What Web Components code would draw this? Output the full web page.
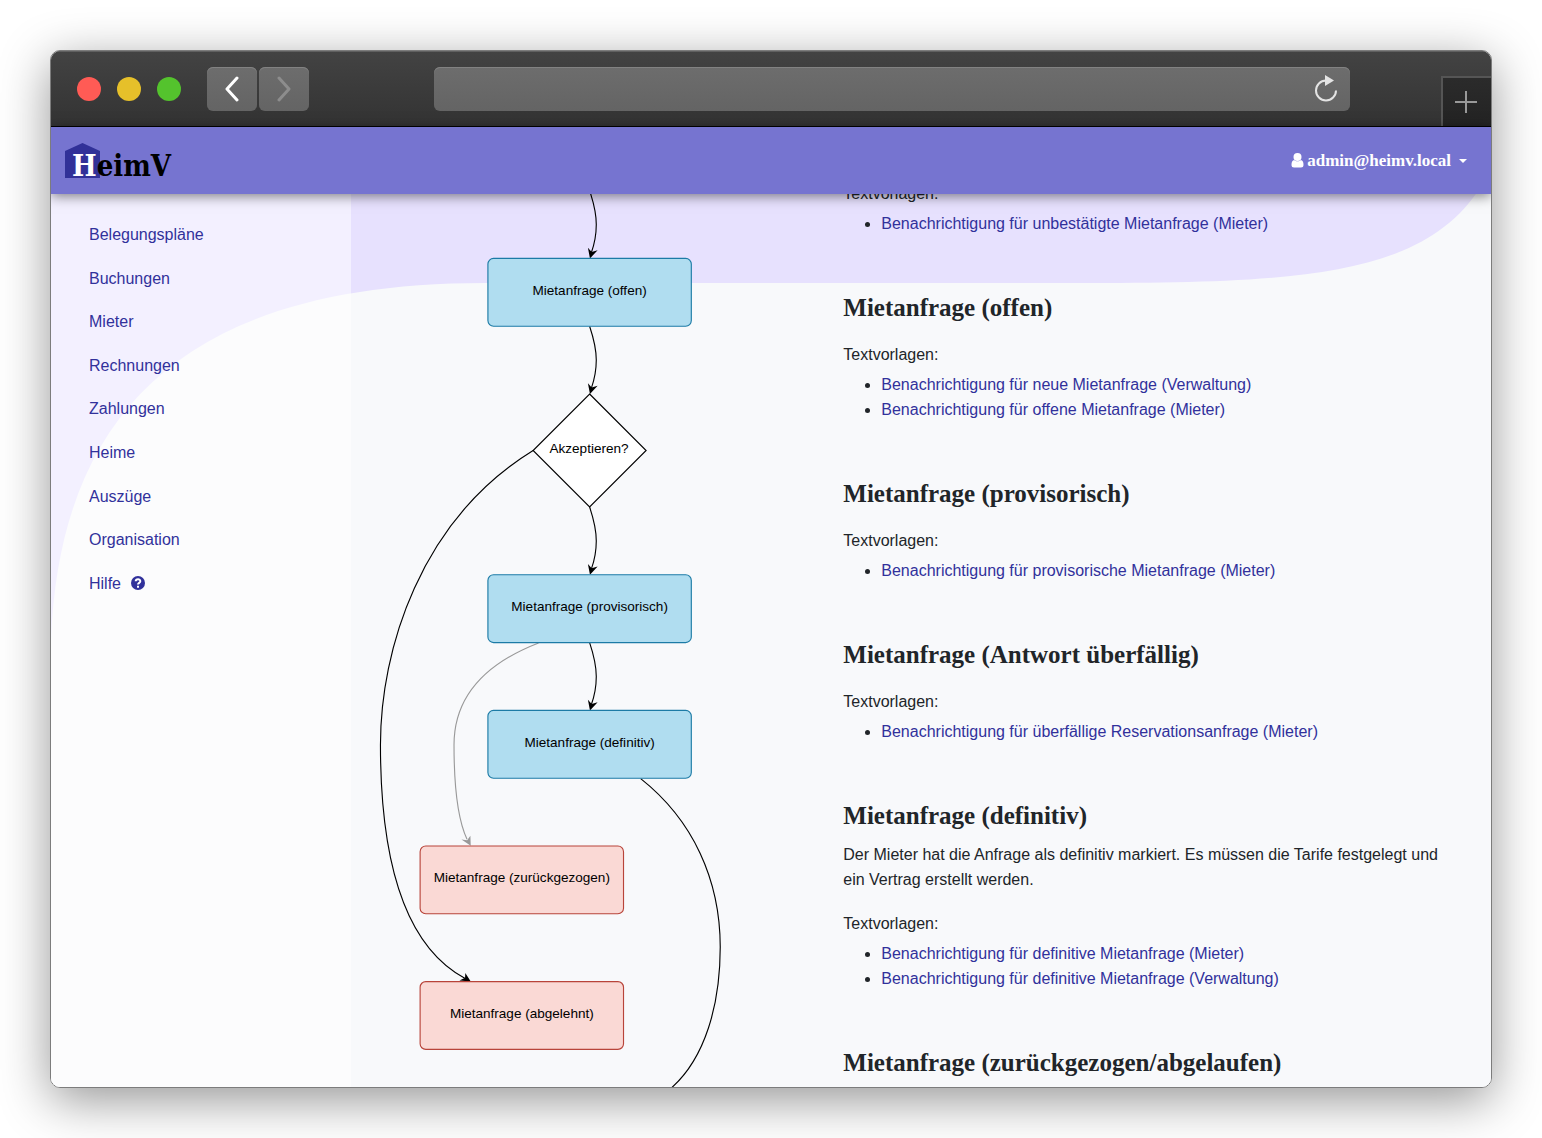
<!DOCTYPE html>
<html lang="de">
<head>
<meta charset="utf-8">
<title>HeimV</title>
<style>
  body {
    margin: 0;
    background: #fff;
    color: #212529;
    font: 16px/25px "Liberation Sans", Arial, sans-serif;
    --link: #31319b;
    --brand: #7674d0;
    --slab: "Liberation Serif", "Times New Roman", serif;
  }
</style>
</head>
<body>
<browser-window>
  <app-header slot="header" user="admin@heimv.local"></app-header>
  <side-nav slot="side"></side-nav>
  <flow-chart slot="diagram"></flow-chart>
  <state-section>
    <a slot="link" href="#t1">Benachrichtigung für unbestätigte Mietanfrage (Mieter)</a>
  </state-section>
  <state-section heading="Mietanfrage (offen)">
    <a slot="link" href="#t2">Benachrichtigung für neue Mietanfrage (Verwaltung)</a>
    <a slot="link" href="#t3">Benachrichtigung für offene Mietanfrage (Mieter)</a>
  </state-section>
  <state-section heading="Mietanfrage (provisorisch)">
    <a slot="link" href="#t4">Benachrichtigung für provisorische Mietanfrage (Mieter)</a>
  </state-section>
  <state-section heading="Mietanfrage (Antwort überfällig)">
    <a slot="link" href="#t5">Benachrichtigung für überfällige Reservationsanfrage (Mieter)</a>
  </state-section>
  <state-section heading="Mietanfrage (definitiv)" description="Der Mieter hat die Anfrage als definitiv markiert. Es müssen die Tarife festgelegt und ein Vertrag erstellt werden.">
    <a slot="link" href="#t6">Benachrichtigung für definitive Mietanfrage (Mieter)</a>
    <a slot="link" href="#t7">Benachrichtigung für definitive Mietanfrage (Verwaltung)</a>
  </state-section>
  <state-section heading="Mietanfrage (zurückgezogen/abgelaufen)" bare></state-section>
</browser-window>

<script>
const define = (name, render) => customElements.define(name, class extends HTMLElement {
  connectedCallback() {
    if (this.shadowRoot) return;
    this.attachShadow({ mode: 'open' }).innerHTML = render(this);
  }
});

define('browser-window', () => `
  <style>
    :host { display: block; box-sizing: border-box; height: 100vh; padding: 50px; }
    .window {
      box-sizing: border-box; height: 100%; display: flex; flex-direction: column;
      border: 1px solid #7c7c7c; border-radius: 10px; overflow: hidden;
      box-shadow: 0 12px 50px rgba(0,0,0,.42);
    }
    .bar {
      flex: none; display: flex; align-items: center; box-sizing: border-box; height: 76px; padding-left: 26px;
      background: linear-gradient(#434343, #333); border-bottom: 1px solid #000;
      box-shadow: inset 0 1px #606060;
    }
    .dots { display: flex; gap: 16px; }
    .dots i { width: 24px; height: 24px; border-radius: 50%; background: #ff5b55; }
    .dots i:nth-child(2) { background: #e6c02a; }
    .dots i:nth-child(3) { background: #54c32d; }
    .history { display: flex; gap: 2px; margin-left: 26px; }
    button { border: 0; padding: 0; margin: 0; background: none; display: grid; place-items: center; }
    .history button, .address {
      height: 44px; border-radius: 6px; background: linear-gradient(#6d6d6d, #646464);
      box-shadow: inset 0 1px #828282;
    }
    .history button { width: 50px; }
    .address { flex: 1; display: flex; align-items: center; margin: 0 91px 0 125px; min-width: 0; }
    input { flex: 1; min-width: 0; border: 0; background: none; height: 40px; padding: 0 12px; color: #fff; outline: 0; }
    .reload { width: 48px; height: 44px; }
    .tab {
      align-self: flex-end; box-sizing: border-box; width: 50px; height: 50px; padding-right: 2px;
      background: linear-gradient(#2b2b2b, #232323); border: solid #555; border-width: 2px 0 0 2px;
    }
    main { position: relative; flex: 1; min-height: 0; display: flex; overflow: hidden; background: #f8f9fb; }
    .backdrop { position: absolute; inset: 0; width: 100%; height: 100%; }
    aside, article { position: relative; }
    aside { flex: none; width: 300px; background: rgba(255,255,255,.5); }
    article { flex: 1; display: grid; grid-template-columns: 3fr 4fr; align-items: start; padding: 0 30px 0 29px; }
    .sections { margin-top: -13px; }
  </style>
  <div class="window">
    <div class="bar">
      <div class="dots"><i></i><i></i><i></i></div>
      <div class="history">
        <button aria-label="Zurück"><svg width="16" height="26" fill="none" stroke="#fff" stroke-width="3" stroke-linecap="round" stroke-linejoin="round"><path d="M13 2 3 13l10 11"/></svg></button>
        <button aria-label="Vorwärts"><svg width="16" height="26" fill="none" stroke="#8d8d8d" stroke-width="3" stroke-linecap="round" stroke-linejoin="round"><path d="M3 2l10 11L3 24"/></svg></button>
      </div>
      <div class="address">
        <input aria-label="Adresse">
        <button class="reload" aria-label="Neu laden"><svg width="24" height="28" viewBox="0 0 24 28"><path d="M12 5.500a10 10 0 1 0 10 10" fill="none" stroke="#e4e4e4" stroke-width="2"/><path d="M11 0l9 5.500L11 11z" fill="#e4e4e4"/></svg></button>
      </div>
      <button class="tab" aria-label="Neuer Tab"><svg width="22" height="22" stroke="#999" stroke-width="2"><path d="M11 0v22M0 11h22"/></svg></button>
    </div>
    <slot name="header"></slot>
    <main>
      <svg class="backdrop" viewBox="0 0 1440 893" preserveAspectRatio="none" aria-hidden="true">
        <path fill="#e7e1fe" d="M0 0V446C9 206 149 89 434 89H1009C1239 89 1369 86 1429-6Z"/>
      </svg>
      <aside><slot name="side"></slot></aside>
      <article>
        <slot name="diagram"></slot>
        <div class="sections"><slot></slot></div>
      </article>
    </main>
  </div>`);

define('app-header', el => `
  <style>
    :host {
      position: relative; z-index: 1; flex: none; display: flex; align-items: center; justify-content: space-between;
      box-sizing: border-box; height: 67px; padding: 0 24px 0 14px; background: var(--brand);
      box-shadow: 0 2px 12px rgba(0,0,0,.5);
    }
    a, svg { display: block; }
    text { font: bold 29px "DejaVu Serif Condensed", "DejaVu Serif", serif; }
    button {
      display: flex; align-items: center; padding: 0; border: 0; background: none; color: #fff;
      font: bold 17px/25px var(--slab);
    }
    .caret { margin-left: 8px; border: solid transparent; border-width: 4px 4px 0; border-top-color: #fff; }
    .user { margin-right: 3px; }
  </style>
  <a href="#" aria-label="HeimV Startseite"><svg width="120" height="52" viewBox="0 -8 120 52">
    <path d="M0 8 17.500 0 35 8v27H0z" fill="#313198"/>
    <text x="7" y="33"><tspan fill="#fff">H</tspan><tspan>eimV</tspan></text>
  </svg></a>
  <button aria-haspopup="true">
    <svg class="user" width="13" height="15" fill="#fff"><circle cx="6.500" cy="4" r="4"/><path d="M3 7C1 7.500 .5 9.500 .5 12c0 1.700 1 2.500 2.500 2.500h7c1.500 0 2.500-.8 2.500-2.500 0-2.500-.5-4.500-2.500-5-2 1.800-5 1.800-7 0z"/></svg>
    <span>${el.getAttribute('user')}</span><span class="caret"></span>
  </button>`);

define('side-nav', () => `
  <style>
    :host { display: block; padding: 19px 38px; }
    ul { list-style: none; margin: 0; padding: 0; display: grid; height: 392px; grid-auto-rows: 1fr; align-items: center; }
    a { color: var(--link); text-decoration: none; display: flex; align-items: center; gap: 10px; }
  </style>
  <nav><ul>
    ${['Belegungspläne', 'Buchungen', 'Mieter', 'Rechnungen', 'Zahlungen', 'Heime', 'Auszüge', 'Organisation'].map(t => `<li><a href="#">${t}</a></li>`).join('')}
    <li><a href="#">Hilfe <svg width="14" height="14" aria-hidden="true"><circle cx="7" cy="7" r="7" fill="#31319b"/><path d="M4.700 5.300C4.800 2.500 9.300 2.500 9.300 5.200 9.300 7 7 6.800 7 8.600" fill="none" stroke="#fff" stroke-width="2"/><path d="M6 9.800h2v2H6z" fill="#fff"/></svg></a></li>
  </ul></nav>`);

const box = (x, y, kind, label) =>
  `<rect class="${kind}" x="${x}" y="${y}" width="180" height="60" rx="5"/><text x="${x + 90}" y="${y + 32}">${label}</text>`;
const drop = y =>
  `<path class="edge" d="M185.500 ${y}c2 6 5.900 18 5.900 30 0 9-1.900 18-4.400 25"/><path d="M185.800 ${y + 60}l-1.800-9.500 3.300 3.800 5.300-1.600z"/>`;

define('flow-chart', () => `
  <style>
    :host { display: block; }
    svg { display: block; width: 339px; overflow: visible; }
    text { font-size: 12px; text-anchor: middle; fill: #000; }
    .edge { fill: none; stroke: #000; }
    .active { fill: #b0ddf0; stroke: #1c7ba6; }
    .closed { fill: #fad9d5; stroke: #b8443a; }
    .choice { fill: #fff; stroke: #000; }
    .soft { stroke: #999; }
  </style>
  <svg viewBox="0 0 300 790" role="img" aria-label="Ablauf der Mietanfrage">
    ${drop(-3)}${drop(117)}${drop(277)}${drop(397)}
    <path class="edge" d="M135.500 227C35.400 288.500 .4 403.500 .4 487.600C.4 598 24.800 667 75 694"/>
    <path d="M80.300 697l-4.800-7.700-.2 4.400-5 2.400z"/>
    <path class="edge soft" d="M140.300 397.300C97.300 414 65.500 441.600 65.500 487.600C65.500 523 69 554 77 571"/>
    <path fill="#999" d="M80.300 576.700l-.3-8.800-2.900 3.900-5-.6z"/>
    <path class="edge" d="M230.700 517.400C277 554 301.100 607 301.100 666.400C301.100 717.700 287.600 764.600 258 791l-6 5"/>
    ${box(95.5, 57, 'active', 'Mietanfrage (offen)')}
    <path class="choice" d="M185.500 177l50 50-50 50-50-50z"/><text x="185" y="229">Akzeptieren?</text>
    ${box(95.5, 337, 'active', 'Mietanfrage (provisorisch)')}
    ${box(95.5, 457, 'active', 'Mietanfrage (definitiv)')}
    ${box(35.5, 577, 'closed', 'Mietanfrage (zurückgezogen)')}
    ${box(35.5, 697, 'closed', 'Mietanfrage (abgelehnt)')}
  </svg>`);

define('state-section', el => {
  const links = [...el.querySelectorAll('a')];
  links.forEach((a, i) => a.slot = 'link' + i);
  const heading = el.getAttribute('heading'), text = el.getAttribute('description');
  return `
  <style>
    :host { display: block; margin-bottom: 54px; }
    h3 { margin: 0 0 8px; font: bold 25px/36px var(--slab); }
    p { margin: 0 0 19px; }
    .label { margin: 16px 0 5px; }
    .label:first-of-type:not(h3 + .label) { margin-top: 0; }
    ul { margin: 0; padding-left: 38px; }
    ::slotted(a) { color: var(--link); text-decoration: none; }
  </style>
  ${heading ? `<h3>${heading}</h3>` : ''}
  ${text ? `<p>${text}</p>` : ''}
  ${el.hasAttribute('bare') ? '' : `<p class="label">Textvorlagen:</p>
  <ul>${links.map((a, i) => `<li><slot name="link${i}"></slot></li>`).join('')}</ul>`}`;
});
</script>
</body>
</html>
